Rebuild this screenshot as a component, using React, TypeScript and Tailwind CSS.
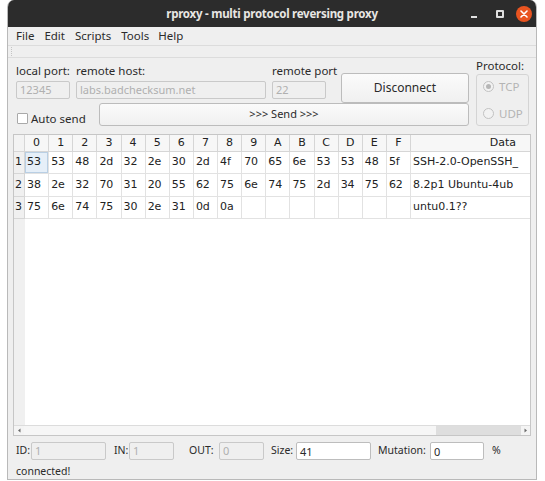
import React from "react";

const rows = [
  {
    n: 1,
    hex: ["53", "53", "48", "2d", "32", "2e", "30", "2d", "4f", "70", "65", "6e", "53", "53", "48", "5f"],
    text: "SSH-2.0-OpenSSH_",
  },
  {
    n: 2,
    hex: ["38", "2e", "32", "70", "31", "20", "55", "62", "75", "6e", "74", "75", "2d", "34", "75", "62"],
    text: "8.2p1 Ubuntu-4ub",
  },
  {
    n: 3,
    hex: ["75", "6e", "74", "75", "30", "2e", "31", "0d", "0a", "", "", "", "", "", "", ""],
    text: "untu0.1??",
  },
];

const cols = ["0", "1", "2", "3", "4", "5", "6", "7", "8", "9", "A", "B", "C", "D", "E", "F"];
const rowHeights = ["h-[22px]", "h-[23px]", "h-[22px]"];

const DisabledInput = ({ value, className }: { value: string; className: string }) => (
  <div
    className={`h-[18px] rounded-[2px] border border-[#c9c9c9] bg-[#efefef] pl-[3px] text-[11px] leading-[16px] text-[#b0b0b0] ${className}`}
  >
    {value}
  </div>
);

const Radio = ({ label, checked }: { label: string; checked?: boolean }) => (
  <div className="flex items-center gap-[5px] text-[11.5px] text-[#b4b4b4]">
    <span className="flex h-[11px] w-[11px] items-center justify-center rounded-full border border-[#c2c2c2] bg-[#f2f2f2]">
      {checked && <span className="h-[5px] w-[5px] rounded-full bg-[#b6b6b6]" />}
    </span>
    {label}
  </div>
);

export default function App() {
  return (
    <div className="h-[481px] w-[545px] overflow-hidden bg-white font-['Noto_Sans',sans-serif] text-[#2a2a2a]">
      <div className="ml-[7px] flex h-[480px] w-[530px] flex-col overflow-hidden rounded-t-[7px] border-x border-b border-[#b9b9b9] bg-[#efefef]">
        {/* title bar */}
        <div className="relative flex h-[27px] shrink-0 items-center justify-center bg-[#2c2c2c]">
          <span className="text-[11.5px] font-bold tracking-[-0.25px] text-[#e8e6e3]">
            rproxy - multi protocol reversing proxy
          </span>
          <span className="absolute left-[463px] top-[16px] h-[2px] w-[6px] bg-[#e0e0e0]" />
          <span className="absolute left-[488px] top-[10px] h-[8px] w-[8px] rounded-[1px] border-2 border-[#e0e0e0]" />
          <span className="absolute left-[508px] top-[6px] flex h-[16px] w-[16px] items-center justify-center rounded-full bg-[#e95420]">
            <svg width="8" height="8" viewBox="0 0 8 8">
              <path d="M1 1L7 7M7 1L1 7" stroke="#fff" strokeWidth="1.6" strokeLinecap="round" />
            </svg>
          </span>
        </div>

        {/* menu bar */}
        <div className="flex h-[18px] shrink-0 items-center pl-[8px] text-[11.5px] text-[#2b2b2b]">
          <span>File</span>
          <span className="ml-[10px]">Edit</span>
          <span className="ml-[10px]">Scripts</span>
          <span className="ml-[10px]">Tools</span>
          <span className="ml-[9px]">Help</span>
        </div>

        {/* toolbar */}
        <div className="flex h-[13px] shrink-0 items-center border-y border-[#dcdcdc] pl-[3px]">
          <span className="h-[9px] w-[2px] border-l border-dotted border-[#c4c4c4]" />
        </div>

        {/* connection form */}
        <div className="flex shrink-0 pl-[8px]">
          <div className="flex w-[453px] flex-col">
            <div className="flex">
              <div className="mt-[6px] flex w-[54px] flex-col">
                <span className="h-[14px] text-[11.5px] leading-[14px]">local port:</span>
                <DisabledInput value="12345" className="mt-[3px] w-[54px]" />
              </div>
              <div className="ml-[6px] mt-[6px] flex w-[190px] flex-col">
                <span className="h-[14px] text-[11.5px] leading-[14px]">remote host:</span>
                <DisabledInput value="labs.badchecksum.net" className="mt-[3px] w-[190px]" />
              </div>
              <div className="ml-[6px] mt-[6px] flex w-[54px] flex-col">
                <span className="h-[14px] whitespace-nowrap text-[11.5px] leading-[14px]">remote port</span>
                <DisabledInput value="22" className="mt-[3px] w-[54px]" />
              </div>
              <button className="ml-[15px] mt-[15px] h-[30px] w-[128px] rounded-[3px] border border-[#bcbcbc] bg-gradient-to-b from-[#fbfbfb] to-[#f0f0f0] text-[12px] text-[#2a2a2a]">
                Disconnect
              </button>
            </div>
            <div className="flex items-start">
              <div className="ml-[1px] mt-[10px] flex items-center">
                <span className="h-[11px] w-[11px] rounded-[1px] border border-[#a9a9a9] bg-white" />
                <span className="ml-[3px] text-[11.5px] leading-[11px]">Auto send</span>
              </div>
              <button className="ml-auto h-[23px] w-[370px] rounded-[3px] border border-[#bcbcbc] bg-gradient-to-b from-[#fbfbfb] to-[#f0f0f0] text-[11px] text-[#2a2a2a]">
                &gt;&gt;&gt; Send &gt;&gt;&gt;
              </button>
            </div>
          </div>
          <div className="ml-[7px] flex flex-col">
            <span className="mt-[1px] h-[14px] text-[11.5px] leading-[14px]">Protocol:</span>
            <div className="mt-[1px] flex h-[52px] w-[53px] flex-col justify-center gap-[10px] rounded-[3px] border border-[#d4d4d4] pl-[6px]">
              <Radio label="TCP" checked />
              <Radio label="UDP" />
            </div>
          </div>
        </div>

        {/* hex table */}
        <div className="mx-[5px] mt-[8px] flex h-[302px] shrink-0 flex-col border border-[#c6c6c6] bg-white font-['DejaVu_Sans',sans-serif] text-[11px] text-[#222]">
          <div className="grid grid-cols-[11px_repeat(16,24.125px)_1fr]">
            <div className="h-[17px] border-b border-r border-[#d6d6d6] bg-[#f3f3f3]" />
            {cols.map((c) => (
              <div
                key={c}
                className="flex h-[17px] items-center justify-center border-b border-r border-[#d6d6d6] bg-[#f7f7f7]"
              >
                {c}
              </div>
            ))}
            <div className="flex h-[17px] items-center justify-end border-b border-[#d6d6d6] bg-[#f7f7f7] pr-[14px]">
              Data
            </div>
            {rows.map((r, ri) => (
              <React.Fragment key={r.n}>
                <div
                  className={`flex ${rowHeights[ri]} items-center border-b border-r border-[#d6d6d6] bg-[#f0f0f0] pl-[1px]`}
                >
                  {r.n}
                </div>
                {r.hex.map((h, ci) => (
                  <div
                    key={ci}
                    className={`flex ${rowHeights[ri]} items-center border-b border-r border-[#e2e2e2] pl-[2px] ${
                      ri === 0 && ci === 0 ? "bg-[#e6eff8] shadow-[inset_0_0_0_1px_#b9cfe4]" : ""
                    }`}
                  >
                    {h}
                  </div>
                ))}
                <div className={`flex ${rowHeights[ri]} items-center border-b border-[#e2e2e2] pl-[2px]`}>
                  {r.text}
                </div>
              </React.Fragment>
            ))}
          </div>
          <div className="flex flex-1">
            <div className="w-[11px] bg-[#f0f0f0]" />
            <div className="flex-1" />
          </div>
          {/* horizontal scrollbar */}
          <div className="flex h-[10px] items-center border-t border-[#dcdcdc] bg-[#f4f4f4]">
            <svg width="9" height="9" viewBox="0 0 9 9" className="ml-[1px]">
              <path d="M5.5 2.5L3 4.5L5.5 6.5Z" fill="#6a6a6a" />
            </svg>
            <div className="h-[9px] w-[412px] bg-[#f6f6f6]" />
            <div className="h-[9px] flex-1 bg-[#dedede]" />
            <svg width="9" height="9" viewBox="0 0 9 9">
              <path d="M3.5 2.5L6 4.5L3.5 6.5Z" fill="#6a6a6a" />
            </svg>
          </div>
        </div>

        {/* status fields */}
        <div className="mt-[6px] flex h-[18px] shrink-0 items-center pl-[8px] text-[10.5px] text-[#2a2a2a]">
          <span className="w-[15px]">ID:</span>
          <DisabledInput value="1" className="w-[75px]" />
          <span className="ml-[8px] w-[15px]">IN:</span>
          <DisabledInput value="1" className="w-[45px]" />
          <span className="ml-[15px] w-[30px]">OUT:</span>
          <DisabledInput value="0" className="w-[45px]" />
          <span className="ml-[7px] w-[25px]">Size:</span>
          <div className="h-[18px] w-[75px] rounded-[2px] border border-[#bdbdbd] bg-white pl-[3px] text-[11px] leading-[18px]">
            41
          </div>
          <span className="ml-[7px] w-[52px]">Mutation:</span>
          <div className="h-[18px] w-[54px] rounded-[2px] border border-[#bdbdbd] bg-white pl-[3px] text-[11px] leading-[18px]">
            0
          </div>
          <span className="ml-[8px]">%</span>
        </div>
        <div className="mt-[4px] h-[14px] pl-[8px] text-[10.5px] leading-[14px]">connected!</div>
      </div>
    </div>
  );
}
